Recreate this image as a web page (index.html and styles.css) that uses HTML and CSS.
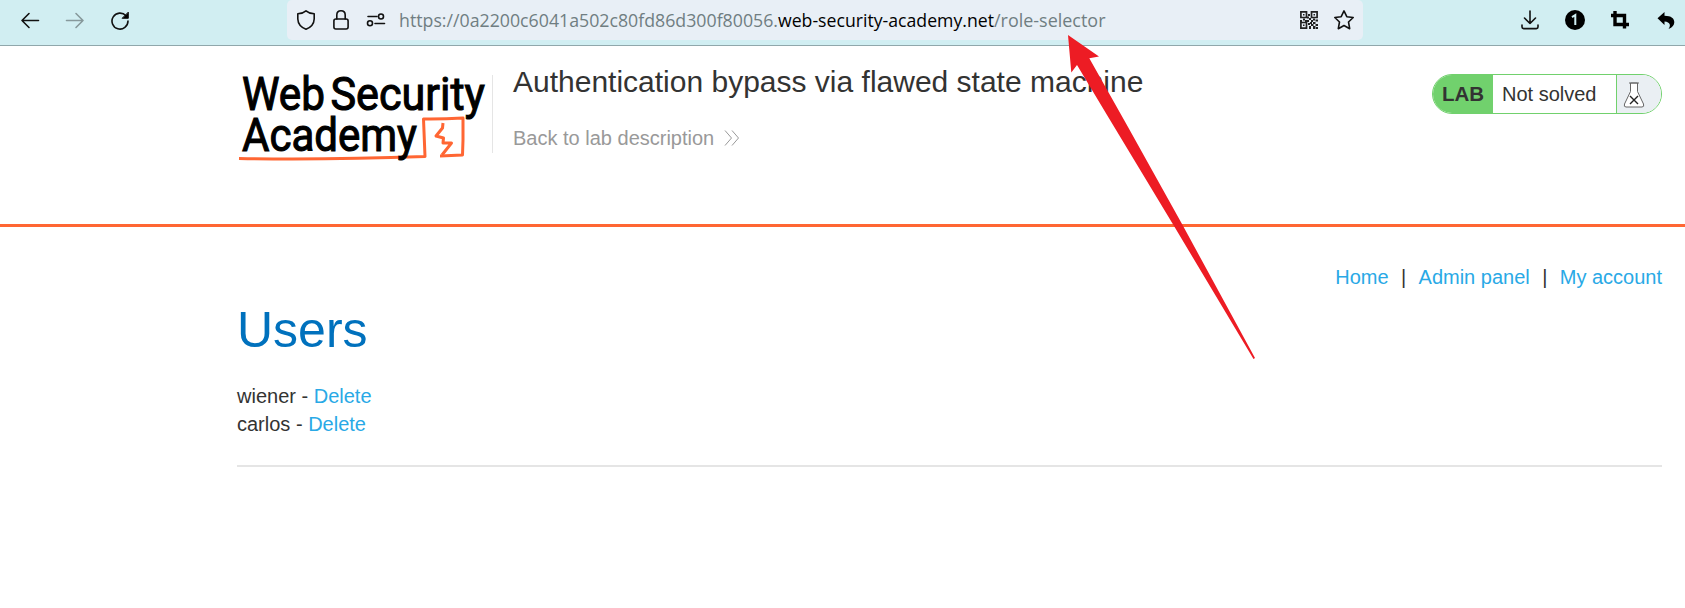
FILE: index.html
```html
<!DOCTYPE html>
<html lang="en">
<head>
<meta charset="utf-8">
<title>Authentication bypass via flawed state machine</title>
<link rel="stylesheet" href="styles.css">
</head>
<body>
<div class="toolbar">
  <div class="nav-buttons">
    <svg width="20" height="20" viewBox="0 0 20 20" class="line"><path d="M18.500 10.500H2M9 3.500L2 10.500L9 17.500"/></svg>
    <svg width="20" height="20" viewBox="0 0 20 20" class="line muted"><path d="M1.500 10.500H18M11 3.500L18 10.500L11 17.500"/></svg>
    <svg width="20" height="20" viewBox="0 0 20 20" class="line"><path d="M16 5.800A8 8 0 1 0 18 11"/><path d="M18.300 2.500V8.300H12.500Z" fill="#000" stroke-width="1"/></svg>
  </div>
  <div class="urlbar">
    <svg width="20" height="22" viewBox="0 0 20 22" class="line"><path d="M10 1.800C8 3.500 4.500 4.700 1.800 4.800V10C2 15 5.500 18.500 10 20.300C14.500 18.500 18 15 18.200 10V4.800C15.500 4.700 12 3.500 10 1.800Z"/></svg>
    <svg width="18" height="22" viewBox="0 0 18 22" class="line lock"><rect x="1.900" y="10" width="14.200" height="10" rx="2"/><path d="M4.800 10V6Q4.800 1.700 9 1.700T13.200 6V10"/></svg>
    <svg width="20" height="22" viewBox="0 0 20 22" class="line sliders"><path d="M2 7.500H11M9 14.500H18.500"/><circle cx="15" cy="7.500" r="2.500"/><circle cx="4" cy="14.300" r="2.500"/></svg>
    <svg class="url" width="712" height="32" viewBox="0 0 712 32"><text y="22"><tspan x="1" textLength="379" lengthAdjust="spacingAndGlyphs">https://0a2200c6041a502c80fd86d300f80056.</tspan><tspan class="host" x="380" textLength="216" lengthAdjust="spacingAndGlyphs">web-security-academy.net</tspan><tspan x="596" textLength="111.500" lengthAdjust="spacingAndGlyphs">/role-selector</tspan></text></svg>
    <svg class="qr" width="18" height="18" viewBox="0 0 18 18"><path fill="none" stroke="#222" stroke-width="1.700" d="M.9.900H6.500V6.500H.9ZM11.500.900H17.100V6.500H11.500ZM.9 11.500H6.500V17.100H.9Z"/><path fill="#222" d="M3 3h1.500v1.500H3ZM13.500 3H15v1.500h-1.500ZM3 13.500h1.500V15H3ZM8 3h2v2H8ZM7 5.500h2v2H7ZM9 7h2v2H9ZM3 7.500h2v2H3ZM0 9h2v2H0ZM5 9h4v2H5ZM11 9h2v2h-2ZM13 7.500h2v2h-2ZM15.500 8.500H18v2h-2.500ZM13 11h2.500v2H13ZM15.500 13H18v2h-2.500ZM10 11h2v2h-2ZM8 12h2v2H8ZM11 13h2.500v2H11ZM9 15h2v3H9ZM13 15h2.500v3H13ZM16 16h2v2h-2Z"/></svg>
    <svg width="22" height="22" viewBox="0 0 22 22" class="line star"><path d="M11 1.900L13.800 7.700L20.200 8.500L15.500 13L16.700 19.700L11 16.500L5.300 19.700L6.500 13L1.800 8.500L8.200 7.700Z"/></svg>
  </div>
  <div class="tools">
    <svg width="18" height="20" viewBox="0 0 18 20" class="line"><path d="M9 1V13.500M3.500 8L9 13.500L14.500 8M1 15V17Q1 18.600 2.700 18.600H15.300Q17 18.600 17 17V15"/></svg>
    <svg width="20" height="20" viewBox="0 0 20 20"><circle cx="10" cy="10" r="10"/><path d="M7 7.200L10.300 5V15" fill="none" stroke="#d0eef2" stroke-width="2"/></svg>
    <svg class="crop" width="18" height="18" viewBox="0 0 18 18"><path fill="none" stroke="#000" stroke-width="3.400" d="M4 0V13.500H18M0 4.500H13.500V17.500"/></svg>
    <svg class="undo" width="18" height="18" viewBox="0 0 18 18"><path d="M7.500 1V4.700C14.500 4.700 17.300 7.500 17.300 11.300C17.300 14 15.500 16.500 11.500 18C14 14.500 13.500 11 7.500 10.500V14L.5 7.200Z"/></svg>
  </div>
</div>

<header class="lab-header">
  <svg class="logo" width="255" height="96" viewBox="0 0 255 96">
    <path class="logo-mark" d="M2 90.500Q90 92 188 88.500L186.500 51Q205 51.300 226 50V72L225.500 87L203 88"/>
    <path class="logo-mark" d="M206 55L205.500 60L199 68L206.500 70L206 75H214.500L205 87"/>
    <g class="logo-text">
      <text x="5" y="41.500" textLength="83" lengthAdjust="spacingAndGlyphs">Web</text>
      <text x="93.500" y="41.500" textLength="154.500" lengthAdjust="spacingAndGlyphs">Security</text>
      <text x="5" y="82.500" textLength="175" lengthAdjust="spacingAndGlyphs">Academy</text>
    </g>
  </svg>
  <div class="title">
    <h2>Authentication bypass via flawed state machine</h2>
    <a class="back" href="#">Back to lab description
      <svg width="16" height="16" viewBox="0 0 16 16"><path d="M1 .5L7.500 8L1 15.500M8 .5L14.500 8L8 15.500"/></svg></a>
  </div>
  <div class="status">
    <b>LAB</b><span>Not solved</span>
    <i><svg width="22" height="26" viewBox="0 0 22 26"><path fill="#fff" d="M7.500 1V9.500L1.500 22Q.5 25 3 25H19Q21.500 25 20.500 22L14.500 9.500V1Z"/><path d="M6 1H16"/><path class="cross" d="M7 14L15 22M15 14L7 22"/></svg></i>
  </div>
</header>

<main>
  <nav><a href="#">Home</a><span>|</span><a href="#">Admin panel</a><span>|</span><a href="#">My account</a></nav>
  <h1>Users</h1>
  <div class="user">wiener - <a href="#">Delete</a></div>
  <div class="user">carlos - <a href="#">Delete</a></div>
  <hr>
</main>

<svg class="arrow" width="190" height="326" viewBox="1067 34 190 326"><path d="M1068 35L1099 56.500L1089.300 58.300L1128 127L1182 224L1255 358L1253.500 359L1174 226L1107 115L1077 65L1071.300 72.500Z"/></svg>
</body>
</html>
```
FILE: styles.css
```css
* { box-sizing: border-box; }
body {
  margin: 0;
  height: 608px;
  overflow: hidden;
  background: #fff;
  color: #333332;
  font: 20px/28px "Liberation Sans", Arial, sans-serif;
}
svg { display: block; flex: none; }
a { color: #29a9e6; text-decoration: none; }

.toolbar {
  display: flex;
  height: 46px;
  background: #d1eef2;
  border-bottom: 1px solid #90a7ab;
}
.nav-buttons { display: flex; gap: 25px; padding: 10px 0 0 20px; width: 287px; }
.line { fill: none; stroke: #111; stroke-width: 1.6; stroke-linecap: round; stroke-linejoin: round; }
.muted { stroke: #87999c; }
.urlbar {
  display: flex;
  width: 1076px;
  height: 40px;
  padding: 9px 9px 0;
  background: #e8eff6;
  border-radius: 5px;
}
.lock { margin-left: 16px; }
.sliders { margin-left: 16px; }
.url { margin: -4px 0 0 12px; font: 17.6px "Open Sans", sans-serif; fill: #707e82; }
.host { fill: #000; }
.qr { margin: 2px 0 0 190px; }
.star { margin-left: 15px; }
.tools { display: flex; gap: 27px; padding: 10px 0 0 158px; }
.tools svg + svg { margin-left: -1px; }
.tools .crop { margin: 1px 0 0 -1px; }
.tools .undo { margin: 1px 0 0 1px; }

.lab-header {
  display: flex;
  height: 181px;
  padding: 22px 23px 0 237px;
  border-bottom: 3px solid #ff6633;
}
.logo { overflow: visible; }
.logo-text { font: 47px Roboto, sans-serif; fill: #000; stroke: #000; stroke-width: 1.1; }
.logo-mark { fill: none; stroke: #ff6633; stroke-width: 3; stroke-linejoin: round; }
.title {
  height: 78px;
  margin-top: 7px;
  padding-left: 20px;
  border-left: 1px solid #e5e5e5;
}
h2 { margin: -12px 0 0; font-size: 30px; font-weight: 400; line-height: 38px; white-space: nowrap; }
.back { display: flex; gap: 10px; align-items: center; margin-top: 23px; color: #999; }
.back svg { fill: none; stroke: #999; stroke-width: 1; }
.status {
  display: flex;
  width: 230px;
  height: 40px;
  margin: 6px 0 0 auto;
  overflow: hidden;
  border: 1px solid #71d16d;
  border-radius: 20px;
  line-height: 38px;
}
.status b { width: 60px; padding-left: 9px; background: #71d16d; font-size: 20.500px; }
.status span { width: 124px; padding-left: 9px; border-right: 1px solid #71d16d; }
.status i { flex: 1; padding: 7px 0 0 6px; background: #eaeff3; }
.status svg { fill: none; stroke: #666; stroke-width: 1; }
.status .cross { stroke: #222; stroke-width: 1.4; }

main { padding: 36px 23px 0 237px; }
nav { display: flex; justify-content: flex-end; }
nav span { width: 30px; text-align: center; }
h1 { margin: 11px 0 0; color: #0071bd; font-size: 50px; font-weight: 400; line-height: 56px; }
.user:nth-of-type(1) { margin-top: 24px; }
hr { height: 2px; margin: 27px 0 0; border: 0; background: #e5e5e5; }
.arrow { position: absolute; left: 1067px; top: 34px; fill: #ed1c24; }
```
